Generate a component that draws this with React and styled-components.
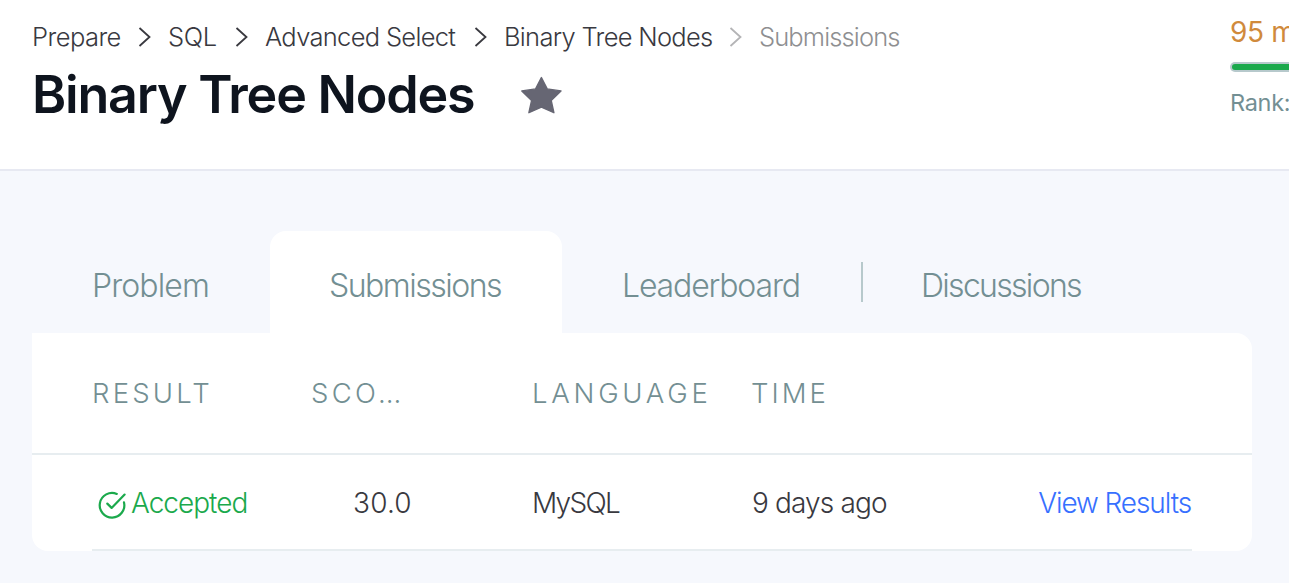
import React from "react";
import styled, { createGlobalStyle } from "styled-components";

const GlobalStyle = createGlobalStyle`
  * { box-sizing: border-box; }
  body {
    margin: 0;
    background: #f6f8fd;
    font-family: Inter, "Liberation Sans", sans-serif;
    font-weight: 300;
    overflow: hidden;
  }
`;

const Page = styled.div`
  width: 1289px;
  height: 583px;
  overflow: hidden;
  background: #f6f8fd;
`;

const Header = styled.header`
  display: flex;
  height: 171px;
  padding-left: 32px;
  background: #fff;
  border-bottom: 2px solid #e7e9f2;
`;

const HeaderMain = styled.div`
  width: 1198px;
  flex: none;
`;

const Breadcrumb = styled.nav`
  display: flex;
  align-items: center;
  height: 32px;
  margin-top: 21px;
`;

const Crumb = styled.span`
  flex: none;
  width: ${(p) => p.$width}px;
  font-size: 25.5px;
  line-height: 32px;
  white-space: nowrap;
  letter-spacing: ${(p) => p.$spacing || 0}px;
  color: ${(p) => (p.$muted ? "#8e8f91" : "#39393f")};
`;

const Chevron = styled.svg`
  flex: none;
  width: 13px;
  height: 20px;
  margin-right: 17px;
  fill: none;
  stroke: ${(p) => (p.$muted ? "#b4b4b6" : "#39393f")};
  stroke-width: 1.8;
`;

const TitleRow = styled.div`
  display: flex;
  align-items: center;
  height: 64px;
  margin-top: 9px;
`;

const Title = styled.h1`
  flex: none;
  width: 488px;
  margin: 0;
  padding-top: 1px;
  font-size: 52px;
  line-height: 64px;
  font-weight: 600;
  white-space: nowrap;
  letter-spacing: ${(p) => p.$spacing || 0}px;
  color: #0e141e;
`;

const Star = styled.svg`
  width: 43px;
  height: 39px;
  fill: #666673;
  stroke: #666673;
  stroke-width: 1.4;
  stroke-linejoin: round;
`;

const Stats = styled.aside`
  flex: none;
  width: 240px;
  white-space: nowrap;
`;

const Points = styled.div`
  margin-top: 15px;
  font-size: 28px;
  line-height: 34px;
  font-weight: 400;
  letter-spacing: -0.3px;
  color: #d08a3c;
`;

const Progress = styled.div`
  height: 10px;
  margin-top: 13px;
  padding: 2px;
  border-radius: 5px;
  background: #b7c9cc;

  &::after {
    content: "";
    display: block;
    height: 6px;
    border-radius: 3px;
    background: #1ba94c;
  }
`;

const Rank = styled.div`
  margin-top: 16px;
  font-size: 23.5px;
  line-height: 30px;
  font-weight: 400;
  letter-spacing: -0.3px;
  color: #738f93;
`;

const Content = styled.main`
  width: 1252px;
  padding: 60px 0 0 32px;
`;

const Tabs = styled.div`
  display: flex;
  align-items: center;
  height: 102px;
`;

const Tab = styled.div`
  flex: none;
  width: ${(p) => p.$width}px;
  height: 102px;
  padding: 34px 0 0 ${(p) => p.$inset || 60}px;
  font-size: 32px;
  line-height: 42px;
  white-space: nowrap;
  letter-spacing: ${(p) => p.$spacing || 0}px;
  color: #738f93;
  border-radius: 16px 16px 0 0;
  background: ${(p) => (p.$active ? "#fff" : "transparent")};
`;

const Divider = styled.div`
  flex: none;
  width: 2px;
  height: 40px;
  background: #b7c9cc;
`;

const Card = styled.section`
  height: 218px;
  background: #fff;
  border-radius: 0 16px 16px 16px;
`;

const HeadRow = styled.div`
  display: grid;
  grid-template-columns: 219px 221px 219px 441px;
  height: 122px;
  padding: 0 60px;
  border-bottom: 2px solid #e7edf0;
`;

const HeadCell = styled.div`
  font-size: 27.5px;
  line-height: 121px;
  white-space: nowrap;
  letter-spacing: ${(p) => p.$spacing}px;
  color: #738f93;
`;

const Row = styled.div`
  display: grid;
  grid-template-columns: 220px 220px 220px 220px 220px;
  height: 96px;
  margin: 0 60px;
  border-bottom: 2px solid #e7edf0;
`;

const Cell = styled.div`
  display: flex;
  align-items: center;
  height: 96px;
  padding-left: ${(p) => p.$indent || 0}px;
  padding-right: ${(p) => (p.$end ? 1 : 0)}px;
  justify-content: ${(p) => (p.$end ? "flex-end" : "flex-start")};
  font-size: 28px;
  white-space: nowrap;
  letter-spacing: ${(p) => p.$spacing || 0}px;
  color: ${(p) => p.$color || "#39393f"};
`;

const CheckIcon = styled.svg`
  flex: none;
  width: 28px;
  height: 28px;
  margin: 3px 5px 0 0;
  fill: none;
  stroke: #1ba94c;
  stroke-width: 2.2;
  stroke-linecap: round;
  stroke-linejoin: round;
`;

const crumbs = [
  { label: "Prepare", width: 106, spacing: -0.55 },
  { label: "SQL", width: 67, spacing: -0.3 },
  { label: "Advanced Select", width: 209, spacing: -0.68 },
  { label: "Binary Tree Nodes", width: 225, spacing: -0.7 },
  { label: "Submissions", width: 160, spacing: -0.88, muted: true },
];

export default function App() {
  return (
    <Page>
      <GlobalStyle />
      <Header>
        <HeaderMain>
          <Breadcrumb>
            {crumbs.map((c, i) => (
              <React.Fragment key={c.label}>
                {i > 0 && (
                  <Chevron viewBox="0 0 13 20" $muted={c.muted}>
                    <path d="M1.5 1 L11.5 10 L1.5 19" />
                  </Chevron>
                )}
                <Crumb $width={c.width} $spacing={c.spacing} $muted={c.muted}>
                  {c.label}
                </Crumb>
              </React.Fragment>
            ))}
          </Breadcrumb>
          <TitleRow>
            <Title $spacing={-1.22}>Binary Tree Nodes</Title>
            <Star viewBox="0 0 43 39">
              <path d="M21.4 2.6 L27.2 13.9 L41 15.9 L31.2 25.4 L33.9 37.7 L21.4 32.2 L8.9 37.7 L11.6 25.4 L1.8 15.9 L15.6 13.9 Z" />
            </Star>
          </TitleRow>
        </HeaderMain>
        <Stats>
          <Points>95 more points</Points>
          <Progress />
          <Rank>Rank: 1</Rank>
        </Stats>
      </Header>
      <Content>
        <Tabs>
          <Tab $width={238} $spacing={-0.9}>Problem</Tab>
          <Tab $width={292} $spacing={-1.5} $inset={59} $active>Submissions</Tab>
          <Tab $width={299} $spacing={-1.15}>Leaderboard</Tab>
          <Divider />
          <Tab $width={280} $spacing={-1.7} $inset={58}>Discussions</Tab>
        </Tabs>
        <Card>
          <HeadRow>
            <HeadCell $spacing={3.2}>RESULT</HeadCell>
            <HeadCell $spacing={3.3}>SCO…</HeadCell>
            <HeadCell $spacing={3.75}>LANGUAGE</HeadCell>
            <HeadCell $spacing={3}>TIME</HeadCell>
          </HeadRow>
          <Row>
            <Cell $indent={6} $spacing={-1} $color="#1ba94c">
              <CheckIcon viewBox="0 0 28 28">
                <path d="M18.8 2.9 A12.3 12.3 0 1 0 26 11.4" />
                <path d="M9.3 12.6 L13.6 16.9 L26.6 3.6" />
              </CheckIcon>
              Accepted
            </Cell>
            <Cell $indent={41} $spacing={0.2}>30.0</Cell>
            <Cell $spacing={-1.7}>MySQL</Cell>
            <Cell $spacing={-0.85}>9 days ago</Cell>
            <Cell $end $spacing={-1.1} $color="#3770ff">View Results</Cell>
          </Row>
        </Card>
      </Content>
    </Page>
  );
}
